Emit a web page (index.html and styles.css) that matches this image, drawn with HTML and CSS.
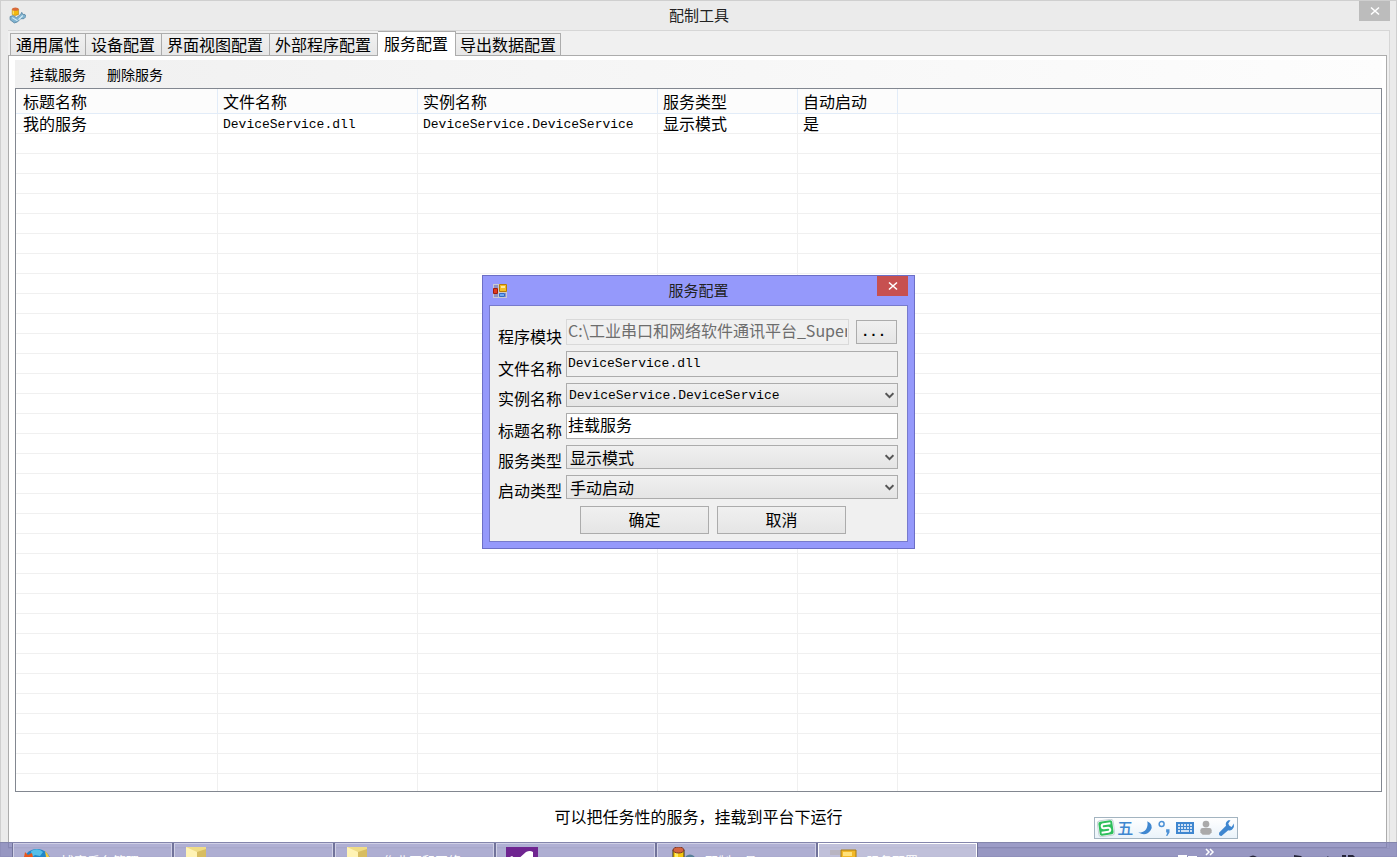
FILE: index.html
```
<!DOCTYPE html>
<html lang="zh-CN">
<head>
<meta charset="utf-8">
<title>配制工具</title>
<link rel="stylesheet" href="styles.css">
</head>
<body>
<main class="window">
  <header class="titlebar">
    <svg class="app-icon" viewBox="0 0 16 16" aria-hidden="true">
      <path d="M1 9l3-1 3 2 4-3 1-2 1 2h2l1 2-2 2-3 0-3 3-3 1-4-3z" fill="#7fb2cf" stroke="#4f7f9c" stroke-width=".7"/>
      <path d="M3 10l5 3M9 12l4-4" stroke="#d4ecf7"/>
      <path d="M3 2v5q2.500 2 6 0V2z" fill="#f3b90d" stroke="#a97900" stroke-width=".5"/>
      <path d="M4 3v4" stroke="#ffe87a"/>
      <ellipse cx="6" cy="2" rx="3" ry="1.500" fill="#d96a3a"/>
    </svg>
    <h1 class="title">配制工具</h1>
    <button class="close" type="button" aria-label="关闭"><svg viewBox="0 0 10 10"><path d="M1 1.500l8 7M9 1.500l-8 7"/></svg></button>
  </header>
  <div class="client">
    <nav class="tabs" role="tablist">
      <button class="tab" type="button" role="tab">通用属性</button>
      <button class="tab" type="button" role="tab">设备配置</button>
      <button class="tab" type="button" role="tab">界面视图配置</button>
      <button class="tab" type="button" role="tab">外部程序配置</button>
      <button class="tab tab-active" type="button" role="tab" aria-selected="true">服务配置</button>
      <button class="tab" type="button" role="tab">导出数据配置</button>
    </nav>
    <section class="panel">
      <div class="toolbar">
        <button class="tool" type="button">挂载服务</button>
        <button class="tool" type="button">删除服务</button>
      </div>
      <div class="list">
        <table class="grid">
          <colgroup><col class="c-title"><col class="c-file"><col class="c-instance"><col class="c-type"><col class="c-auto"><col></colgroup>
          <thead><tr><th>标题名称</th><th>文件名称</th><th>实例名称</th><th>服务类型</th><th>自动启动</th><th></th></tr></thead>
          <tbody>
            <tr><td>我的服务</td><td class="mono">DeviceService.dll</td><td class="mono">DeviceService.DeviceService</td><td>显示模式</td><td>是</td><td></td></tr>
            <tr class="empty"><td></td><td></td><td></td><td></td><td></td><td></td></tr>
          </tbody>
        </table>
      </div>
      <p class="hint">可以把任务性的服务，挂载到平台下运行</p>
    </section>
  </div>
</main>

<section class="dialog" role="dialog" aria-labelledby="dialog-title">
  <header class="dialog-bar">
    <svg class="dialog-icon" viewBox="0 0 14 14" aria-hidden="true">
      <path d="M0 0h14v14H0z" fill="#c9c9d2"/>
      <path d="M1 1h4v3H1zM1 10h4v3H1zM12 9h1v4h-1z" fill="#8f91c4"/>
      <path d="M6.500 .5h7v7h-7z" fill="#f3bd25" stroke="#b77c08"/>
      <path d="M8 2h4v2H8z" fill="#ffe99a"/>
      <path d="M.5 4.500h4v5h-4z" fill="#e2391d" stroke="#9d1b0c"/>
      <path d="M6.500 9.500h5v3h-5z" fill="#6fa8f3" stroke="#3369c4"/>
    </svg>
    <h2 class="title" id="dialog-title">服务配置</h2>
    <button class="close close-red" type="button" aria-label="关闭"><svg viewBox="0 0 10 10"><path d="M1 1.500l8 7M9 1.500l-8 7"/></svg></button>
  </header>
  <form class="form">
    <div class="row">
      <label for="module">程序模块</label>
      <input class="box box-disabled" id="module" type="text" value="C:\工业串口和网络软件通讯平台_Super" disabled>
      <button class="btn browse" type="button">...</button>
    </div>
    <div class="row">
      <label for="file">文件名称</label>
      <input class="box box-readonly mono" id="file" type="text" value="DeviceService.dll" readonly>
    </div>
    <div class="row">
      <label for="instance">实例名称</label>
      <span class="combo"><select class="mono" id="instance"><option>DeviceService.DeviceService</option></select><svg viewBox="0 0 8 6"><path d="M.5 1l3.500 3.500L7.500 1"/></svg></span>
    </div>
    <div class="row">
      <label for="caption">标题名称</label>
      <input class="box" id="caption" type="text" value="挂载服务">
    </div>
    <div class="row">
      <label for="kind">服务类型</label>
      <span class="combo"><select id="kind"><option>显示模式</option></select><svg viewBox="0 0 8 6"><path d="M.5 1l3.500 3.500L7.500 1"/></svg></span>
    </div>
    <div class="row">
      <label for="startup">启动类型</label>
      <span class="combo"><select id="startup"><option>手动启动</option></select><svg viewBox="0 0 8 6"><path d="M.5 1l3.500 3.500L7.500 1"/></svg></span>
    </div>
    <div class="actions">
      <button class="btn" type="submit">确定</button>
      <button class="btn" type="button">取消</button>
    </div>
  </form>
</section>

<aside class="ime" aria-label="输入法">
  <svg viewBox="0 0 18 18"><rect x="1" y="1" width="16" height="16" rx="3" fill="#fff" stroke="#c8d3d8" transform="rotate(-8 9 9)"/><rect x="2" y="2" width="14" height="14" rx="2" fill="#2fbf5c" transform="rotate(-8 9 9)"/><path d="M14 5H7Q5 5 5 7t2 2h4q2 0 2 2t-2 2H4" fill="none" stroke="#fff" stroke-width="2" transform="rotate(-8 9 9)"/></svg>
  <span class="ime-mode">五</span>
  <svg viewBox="0 0 16 16"><path d="M10 2q6 3 3 8-4 6-11 2 5 0 7-3t1-7z" fill="#3f87d0"/></svg>
  <svg viewBox="0 0 16 16"><circle cx="5" cy="4.500" r="2.200" fill="none" stroke="#4c91d6" stroke-width="1.300"/><path d="M9 9h3v3l-2 3H9l1-3H9z" fill="#4c91d6"/></svg>
  <svg viewBox="0 0 18 16"><rect x="0" y="2" width="18" height="12" fill="#3f87d0"/><path d="M2 5h14M2 8h14" stroke="#fff" stroke-width="1.600" stroke-dasharray="2 1"/><path d="M2 11h2M5 11h8M14 11h2" stroke="#fff" stroke-width="1.600"/></svg>
  <svg viewBox="0 0 16 16"><circle cx="8" cy="4.500" r="3" fill="#aaa"/><path d="M3 10q0-2 2-2h6q2 0 2 2v2l-2 2H5l-2-2z" fill="#aaa"/></svg>
  <svg viewBox="0 0 16 16"><path d="M2 12l6-6q-1-3 2-5h2l-2 3 1 2 2 1 2-3v3q-2 4-5 3l-6 5q-3 0-2-3z" fill="#3f87d0"/></svg>
</aside>

<footer class="taskbar">
  <div class="tasks">
    <button class="task" type="button">
      <svg viewBox="0 0 32 32"><circle cx="14" cy="16" r="14" fill="#1f86c8"/><path d="M8 4q7-4 12 1l-3 4-5-1-3 2z" fill="#55bfe8"/><path d="M22 4q7 6 5 17l-3-5z" fill="#f5c63a"/><path d="M0 16L2 5l3 3 4-2 1 4 3 1-2 6H1z" fill="#e8571c"/></svg>
      <span>博客后台管理</span>
    </button>
    <button class="task" type="button">
      <svg viewBox="0 0 32 32"><path d="M2 0h20v30H2z" fill="#f0dc86"/><path d="M2 0l11 5v25L2 28z" fill="#fff3b5"/><path d="M13 5l9-3v25l-9 3z" fill="#d8bd61"/></svg>
    </button>
    <button class="task" type="button">
      <svg viewBox="0 0 32 32"><path d="M2 0h20v30H2z" fill="#f0dc86"/><path d="M2 0l11 5v25L2 28z" fill="#fff3b5"/><path d="M13 5l9-3v25l-9 3z" fill="#d8bd61"/></svg>
      <span>作业图和网络</span>
    </button>
    <button class="task" type="button">
      <svg viewBox="0 0 32 32"><path d="M0 0h32v32H0z" fill="#6f2590"/><path d="M20 5q4-2 7 0v22l-7 1-9-9-5 4-2-1V10l2-1 5 4z" fill="#fff"/></svg>
    </button>
    <button class="task" type="button">
      <svg viewBox="0 0 32 32"><path d="M6 3h11v17H6z" fill="#f5c70f" stroke="#3d3210"/><path d="M8 5h3v14H8z" fill="#ffec62"/><ellipse cx="11.500" cy="3" rx="5.500" ry="3" fill="#d5643f" stroke="#793624"/><circle cx="23" cy="13" r="4" fill="none" stroke="#567f98" stroke-width="3"/></svg>
      <span>配制工具</span>
    </button>
    <button class="task task-active" type="button">
      <svg viewBox="0 0 32 32"><path d="M2 3h10v5H2z" fill="#b9b5c1"/><path d="M2 10h10v12H2z" fill="#d8351b"/><path d="M13 3h15v15H13z" fill="#f2b827" stroke="#a77a12"/><path d="M15 5h9v4h-9z" fill="#ffe17a"/></svg>
      <span>服务配置</span>
    </button>
  </div>
  <svg class="tray" viewBox="0 0 228 15" aria-hidden="true">
    <path d="M37 6l3 3-3 3M41 6l3 3-3 3" fill="none" stroke="#fff" stroke-width="1.500"/>
    <path d="M9 12h9v3H9zM19 13h9v2h-9z" fill="#fff"/>
    <path d="M79 15q5-5 10 0zM125 12l7 1 2 2h-9zM157 15l2-2 1 2zM173 12h4v3h-4zM179 12h5l3 3h-8z" fill="#25253a"/>
  </svg>
</footer>
</body>
</html>
```
FILE: styles.css
```
* { box-sizing: border-box; }

body {
  margin: 0;
  position: relative;
  height: 100vh;
  overflow: hidden;
  color: #000;
  font: 16px/20px "Noto Sans CJK SC", sans-serif;
}

button, input, select {
  margin: 0;
  padding: 0;
  border: 1px solid #acacac;
  border-radius: 0;
  color: inherit;
  font: inherit;
}

.mono { font-family: "Liberation Mono", "Noto Sans CJK SC", monospace; font-size: 13px; }

/* Main window */
.window {
  display: flex;
  flex-direction: column;
  height: 100%;
  padding: 0 6px 7px 7px;
  border: 1px solid #cfcfcf;
  background: #ebebeb;
}
.titlebar, .dialog-bar {
  display: grid;
  grid-template-columns: 1fr auto 1fr;
  align-items: center;
  height: 29px;
  flex: none;
}
.app-icon { width: 17px; height: 17px; margin-left: 1px; }
.title { margin: 0; padding-bottom: 2px; color: #222; font-size: 15px; font-weight: 400; line-height: 20px; }
.close {
  justify-self: end;
  align-self: start;
  display: grid;
  place-items: center;
  width: 31px;
  height: 20px;
  border: 0;
  background: #bcbcbc;
}
.close svg { width: 10px; height: 10px; fill: none; stroke: #fff; stroke-width: 1.6; }
.close-red { background: #c75050; }

.client {
  flex: 1;
  display: flex;
  flex-direction: column;
  min-height: 0;
  padding-right: 2px;
  border: 1px solid #d6d6d6;
  border-left: 0;
  background: #f0f0f0;
}
.tabs { display: flex; align-items: flex-end; height: 24px; padding-left: 2px; }
.tab {
  height: 22px;
  padding: 0 6px 2px 5px;
  border-bottom: 0;
  background: linear-gradient(#f1f1f1, #e6e6e6);
  line-height: 20px;
}
.tab:first-child { padding: 0 5px 2px; }
.tab:last-child { padding: 0 4px 2px; }
.tab + .tab { border-left: 0; }
.tab-active {
  height: 25px;
  margin-bottom: -1px;
  padding: 0 7px 3px 6px;
  background: #fff;
  position: relative;
}
.panel {
  flex: 1;
  display: flex;
  flex-direction: column;
  min-height: 0;
  padding: 4px 4px 0 6px;
  border: 1px solid #acacac;
  background: #fff;
}
.toolbar {
  display: flex;
  align-items: center;
  gap: 21px;
  height: 28px;
  padding-left: 15px;
  background: linear-gradient(90deg, #f0f0f0, #fdfdfd);
}
.tool { border: 0; background: none; font-size: 14px; }

.list { flex: 1; min-height: 0; border: 1px solid #828790; background: #fff; }
.grid { width: 100%; height: 100%; border-collapse: separate; border-spacing: 0; table-layout: fixed; }
.c-title { width: 202px; }
.c-file { width: 200px; }
.c-instance { width: 240px; }
.c-type { width: 140px; }
.c-auto { width: 100px; }
.grid th, .grid td {
  height: 20px;
  padding: 0 0 0 5px;
  border: solid #f0f0f0;
  border-width: 0 1px 1px 0;
  font-weight: 400;
  line-height: 19px;
  text-align: left;
  white-space: nowrap;
}
.grid th:first-child, .grid td:first-child { padding-left: 7px; }
.grid th { height: 25px; border-color: #e2ecf8; background: #fcfcfc; }
.grid th:last-child, .grid td:last-child { border-right: 0; }
.grid td.mono { padding-top: 2px; line-height: 17px; }
.grid .empty td {
  height: auto;
  border-bottom: 0;
  background: repeating-linear-gradient(#fff 0 19px, #f0f0f0 19px 20px);
}
.hint { margin: 0; padding: 14px 0 21px; text-align: center; }

/* Service dialog */
.dialog {
  position: absolute;
  top: 275px;
  left: 0;
  right: 0;
  width: 433px;
  margin: 0 auto;
  padding: 0 6px 6px;
  border: 1px solid #6c6fc6;
  background: #9599fb;
}
.dialog-icon { width: 14px; height: 14px; margin-left: 4px; }
.form {
  display: flex;
  flex-direction: column;
  gap: 6px;
  padding: 13px 9px 7px 8px;
  border: 1px solid #777acc;
  background: #f0f0f0;
}
.row { display: flex; align-items: flex-end; gap: 4px; }
.row label { flex: none; width: 64px; line-height: 18px; }
.box {
  flex: 1;
  min-width: 0;
  height: 26px;
  padding: 0 1px 4px;
  background: #fff;
}
.box-readonly { padding-bottom: 2px; background: #f0f0f0; }
.box-disabled { border-color: #d9d9d9; background: #f0f0f0; color: #6d6d6d; }
.combo { flex: 1; position: relative; display: flex; }
.combo select {
  flex: 1;
  height: 24px;
  padding: 0 20px 1px 3px;
  appearance: none;
  background: linear-gradient(#f0f0f0, #e5e5e5);
}
.combo select.mono { padding: 2px 20px 0 2px; }
.combo svg {
  position: absolute;
  right: 4px;
  top: 9px;
  width: 9px;
  height: 7px;
  fill: none;
  stroke: #555;
  stroke-width: 1.8;
  pointer-events: none;
}
.btn { padding-bottom: 2px; background: linear-gradient(#f0f0f0, #e5e5e5); }
.browse {
  width: 41px;
  height: 24px;
  margin: 0 1px 1px 3px;
  padding: 0 6px 0 0;
  font-family: "Liberation Mono", monospace;
  font-weight: 700;
  font-size: 14px;
}
.actions { display: flex; justify-content: center; gap: 8px; padding: 1px 0 0 30px; }
.actions .btn { width: 129px; height: 28px; }

/* Input method bar */
.ime {
  position: absolute;
  right: 159px;
  bottom: 18px;
  display: flex;
  align-items: center;
  justify-content: space-between;
  width: 144px;
  height: 22px;
  padding: 0 2px;
  border: 1px solid #a3b4c0;
  background: linear-gradient(#fff, #eaf3fa);
}
.ime svg { width: 18px; height: 18px; }
.ime-mode { padding-bottom: 2px; color: #3f87d0; font-weight: 500; }

/* Taskbar */
.taskbar {
  position: absolute;
  left: 0;
  right: 0;
  bottom: 0;
  display: flex;
  justify-content: space-between;
  align-items: flex-start;
  height: 15px;
  padding-left: 13px;
  overflow: hidden;
  border-top: 1px solid #8486ac;
  background: rgba(122, 122, 180, .74);
}
.tasks { display: flex; gap: 2px; }
.task {
  display: flex;
  gap: 6px;
  width: 159px;
  height: 40px;
  padding: 3px 0 0 9px;
  border: 1px solid #d0d0e6;
  outline: 1px solid #70729a;
  background: rgba(190, 190, 220, .6);
  color: #fff;
  font-size: 13px;
}
.task svg { flex: none; width: 32px; height: 32px; }
.task span { padding-top: 4px; }
.task-active { border-color: #fff; background: rgba(205, 205, 225, .75); }
.tray { flex: none; width: 228px; height: 15px; }
```
